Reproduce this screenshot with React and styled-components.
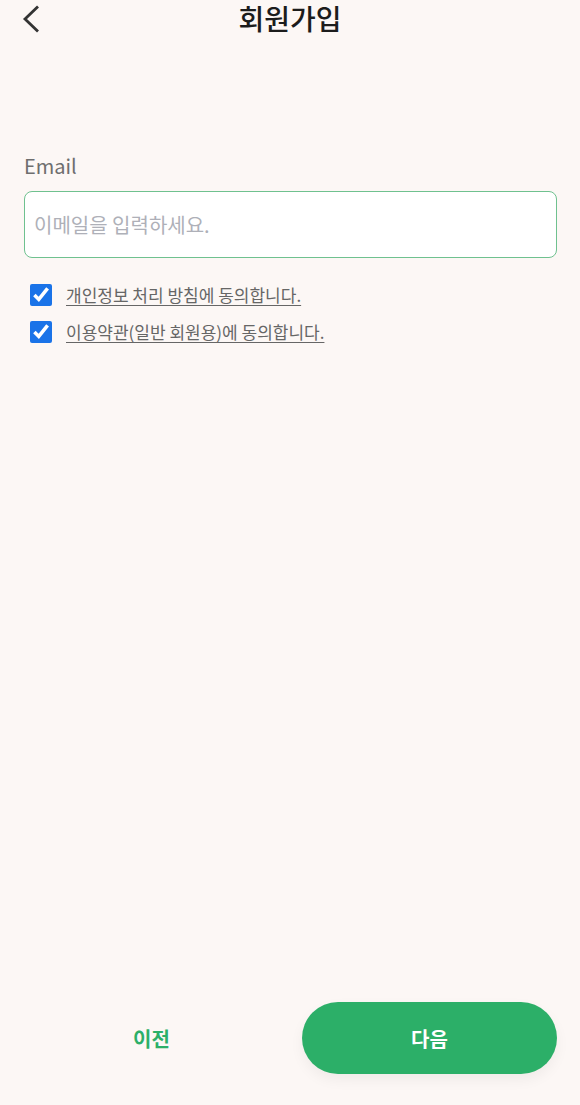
import React, { useState } from "react";
import styled, { createGlobalStyle } from "styled-components";

const Global = createGlobalStyle`
  html, body { margin: 0; padding: 0; background: #fcf7f5; }
  body { font-family: "Noto Sans CJK KR", "Noto Sans", sans-serif; }
  * { box-sizing: border-box; }
`;

const Page = styled.div`
  min-height: 100vh;
  display: flex;
  flex-direction: column;
  background: #fcf7f5;
`;

const Header = styled.header`
  position: relative;
  height: 38px;
  display: flex;
  align-items: center;
  justify-content: center;
`;

const BackButton = styled.button`
  position: absolute;
  left: 18px;
  top: 3px;
  width: 26px;
  height: 32px;
  padding: 0;
  border: 0;
  background: none;
  display: flex;
  align-items: center;
  justify-content: center;
  cursor: pointer;
`;

const Title = styled.h1`
  margin: 0 0 2px;
  font-size: 28px;
  font-weight: 500;
  color: #1c1c1c;
  line-height: 36px;
`;

const Content = styled.main`
  flex: 1;
  display: flex;
  flex-direction: column;
  padding: 114px 23px 0 24px;
`;

const Label = styled.label`
  font-size: 20px;
  color: #6e6e6e;
  line-height: 28px;
  margin-bottom: 11px;
`;

const Input = styled.input`
  width: 100%;
  height: 67px;
  border: 1px solid #6fc18f;
  border-radius: 8px;
  background: #ffffff;
  padding: 0 9px;
  font-family: inherit;
  font-size: 20px;
  color: #333;
  outline: none;
  caret-color: #444;
  &::placeholder { color: #aeb0b8; }
`;

const Agreements = styled.div`
  display: flex;
  flex-direction: column;
  gap: 15px;
  margin-top: 26px;
  padding-left: 6px;
`;

const AgreeRow = styled.label`
  display: flex;
  align-items: center;
  gap: 14px;
  cursor: pointer;
`;

const Check = styled.input`
  width: 22px;
  height: 22px;
  margin: 0;
  accent-color: #1a73e8;
`;

const AgreeText = styled.span`
  font-size: 17px;
  color: #666;
  text-decoration: underline;
  text-underline-offset: 3px;
  line-height: 22px;
`;

const Footer = styled.footer`
  display: flex;
  gap: 23px;
  padding: 0 23px 31px 24px;
`;

const NavButton = styled.button`
  flex: 1;
  height: 72px;
  border: 0;
  border-radius: 36px;
  font-family: inherit;
  font-size: 20px;
  font-weight: 700;
  cursor: pointer;
  background: ${(p) => (p.$primary ? "#2caf68" : "transparent")};
  color: ${(p) => (p.$primary ? "#ffffff" : "#2caf68")};
  box-shadow: ${(p) => (p.$primary ? "0 6px 14px rgba(0,0,0,0.05)" : "none")};
`;

export default function App() {
  const [a, setA] = useState(true);
  const [b, setB] = useState(true);
  return (
    <>
      <Global />
      <Page>
        <Header>
          <BackButton aria-label="back">
            <svg width="20" height="30" viewBox="0 0 20 30">
              <path d="M17 2.5 L4 15 L17 27.5" fill="none" stroke="#333" strokeWidth="2.8" />
            </svg>
          </BackButton>
          <Title>회원가입</Title>
        </Header>
        <Content>
          <Label htmlFor="email">Email</Label>
          <Input id="email" type="email" placeholder="이메일을 입력하세요." autoFocus />
          <Agreements>
            <AgreeRow>
              <Check type="checkbox" checked={a} onChange={() => setA(!a)} />
              <AgreeText>개인정보 처리 방침에 동의합니다.</AgreeText>
            </AgreeRow>
            <AgreeRow>
              <Check type="checkbox" checked={b} onChange={() => setB(!b)} />
              <AgreeText>이용약관(일반 회원용)에 동의합니다.</AgreeText>
            </AgreeRow>
          </Agreements>
        </Content>
        <Footer>
          <NavButton>이전</NavButton>
          <NavButton $primary>다음</NavButton>
        </Footer>
      </Page>
    </>
  );
}
